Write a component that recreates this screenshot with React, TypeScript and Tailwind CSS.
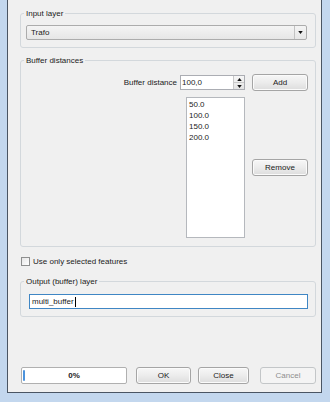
import type { ReactNode } from 'react';

const buffers = ['50.0', '100.0', '150.0', '200.0'];

function GroupBox({ title, className, children }: { title: string; className: string; children: ReactNode }) {
  return (
    <fieldset className={`ml-[12px] w-[296px] shrink-0 rounded-[3px] border border-[#d3d8dc] ${className}`}>
      <legend className="ml-[3px] h-[11px] px-[2px] text-[8px] leading-[11px] text-[#1b1b1b]">{title}</legend>
      {children}
    </fieldset>
  );
}

function WinButton({ label, className, disabled }: { label: string; className: string; disabled?: boolean }) {
  return (
    <button
      type="button"
      disabled={disabled}
      className={[
        'flex h-[17px] shrink-0 items-center justify-center rounded-[3px] border text-[8px] leading-none',
        disabled
          ? 'border-[#c3c6c8] bg-[#f4f4f4] text-[#8e8e8e]'
          : 'border-[#a5a5a5] bg-gradient-to-b from-[#f7f7f7] via-[#ececec] to-[#dddddd] text-[#1b1b1b] shadow-[inset_0_0_0_1px_#fbfbfb]',
        className,
      ].join(' ')}
    >
      {label}
    </button>
  );
}

export default function App() {
  return (
    <div className="flex h-[402px] w-[330px] bg-[#c3d7ee] pl-[7px] font-['Liberation_Sans',Arial,sans-serif] text-[8px] text-[#1b1b1b]">
      <div className="flex h-[393px] w-[315px] flex-col border-x border-b border-[#4a5563] bg-[#f0f0f0]">
        <GroupBox title="Input layer" className="mt-[8px] h-[40px]">
          <div className="ml-[5px] mt-[6px] flex h-[15px] w-[281px] items-stretch rounded-[2px] border border-[#acacac] bg-gradient-to-b from-[#f4f4f4] to-[#e6e6e6]">
            <span className="flex flex-1 items-center pl-[4px]">Trafo</span>
            <span className="flex w-[12px] items-center justify-center border-l border-[#c2c2c2]">
              <svg viewBox="0 0 6 4" className="h-[3px] w-[5px]" aria-hidden="true">
                <path d="M0 0h6L3 4Z" fill="#111" />
              </svg>
            </span>
          </div>
        </GroupBox>

        <GroupBox title="Buffer distances" className="mt-[7px] h-[192px]">
          <div className="mt-[8px] flex pr-[7px]">
            <div className="flex flex-1 flex-col items-end">
              <div className="flex h-[17px] items-center">
                <span>Buffer distance</span>
                <div className="ml-[3px] flex h-[15px] w-[65px] border border-[#abadb3] bg-white">
                  <span className="flex flex-1 items-center pl-[1px]">100,0</span>
                  <span className="flex w-[11px] flex-col border-l border-[#c9c9c9] bg-gradient-to-b from-[#f6f6f6] to-[#e4e4e4]">
                    <span className="flex flex-1 items-center justify-center border-b border-[#c9c9c9]">
                      <svg viewBox="0 0 6 4" className="h-[3px] w-[5px]" aria-hidden="true">
                        <path d="M3 0l3 4H0Z" fill="#111" />
                      </svg>
                    </span>
                    <span className="flex flex-1 items-center justify-center">
                      <svg viewBox="0 0 6 4" className="h-[3px] w-[5px]" aria-hidden="true">
                        <path d="M0 0h6L3 4Z" fill="#111" />
                      </svg>
                    </span>
                  </span>
                </div>
              </div>
              <div className="mt-[6px] h-[141px] w-[59px] border border-[#b5b8bd] bg-white pl-[2px] pt-[1px]">
                {buffers.map((b) => (
                  <div key={b} className="leading-[11px]">
                    {b}
                  </div>
                ))}
              </div>
            </div>
            <div className="ml-[7px] flex w-[56px] flex-col">
              <WinButton label="Add" className="w-[56px]" />
              <WinButton label="Remove" className="mt-[68px] w-[56px]" />
            </div>
          </div>
        </GroupBox>

        <div className="ml-[13px] mt-[9px] flex h-[11px] items-center">
          <span className="h-[9px] w-[9px] border border-[#8e8f8f] bg-gradient-to-br from-[#e6e6e6] to-white" />
          <span className="ml-[3px]">Use only selected features</span>
        </div>

        <GroupBox title="Output (buffer) layer" className="mt-[9px] h-[41px]">
          <div className="ml-[8px] mt-[7px] flex h-[15px] w-[279px] items-center border border-[#3f86c4] bg-white pl-[2px]">
            <span>multi_buffer</span>
            <span className="ml-[1px] h-[10px] w-px bg-black" />
          </div>
        </GroupBox>

        <div className="flex-1" />

        <div className="mb-[8px] ml-[13px] flex h-[17px] items-stretch">
          <div className="relative flex w-[106px] items-center justify-center rounded-[2px] border border-[#b0b0b0] bg-white font-bold">
            <span className="absolute left-[1px] top-[2px] h-[11px] w-[2px] rounded-[1px] bg-[#4c93dc]" />
            0%
          </div>
          <WinButton label="OK" className="ml-[9px] w-[55px]" />
          <WinButton label="Close" className="ml-[7px] w-[51px]" />
          <WinButton label="Cancel" className="ml-[11px] w-[56px]" disabled />
        </div>
      </div>
    </div>
  );
}
